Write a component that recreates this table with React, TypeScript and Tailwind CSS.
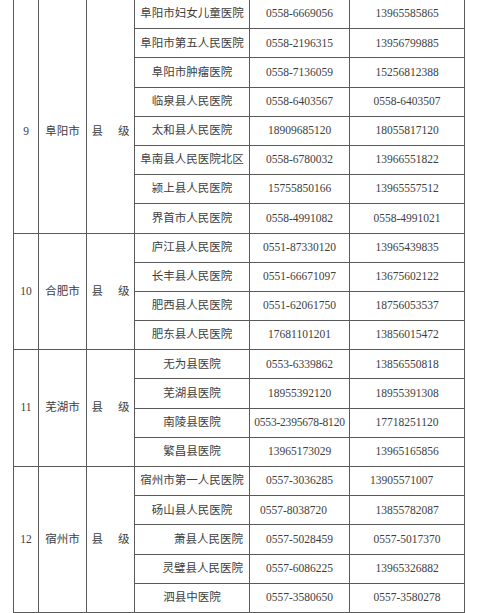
import React from "react";

type Row = { name: string; p1: string; p2: string; nameCls?: string; p1Cls?: string; p2Cls?: string };
type Group = { no: string; city: string; rows: Row[]; pad: string; grow: string };

const groups: Group[] = [
  {
    no: "9",
    city: "阜阳市",
    pad: "pt-[30px]",
    grow: "grow-[8]",
    rows: [
      { name: "阜阳市妇女儿童医院", p1: "0558-6669056", p2: "13965585865" },
      { name: "阜阳市第五人民医院", p1: "0558-2196315", p2: "13956799885" },
      { name: "阜阳市肿瘤医院", p1: "0558-7136059", p2: "15256812388" },
      { name: "临泉县人民医院", p1: "0558-6403567", p2: "0558-6403507" },
      { name: "太和县人民医院", p1: "18909685120", p2: "18055817120" },
      { name: "阜南县人民医院北区", p1: "0558-6780032", p2: "13966551822" },
      { name: "颍上县人民医院", p1: "15755850166", p2: "13965557512" },
      { name: "界首市人民医院", p1: "0558-4991082", p2: "0558-4991021" },
    ],
  },
  {
    no: "10",
    city: "合肥市",
    pad: "",
    grow: "grow-[4]",
    rows: [
      { name: "庐江县人民医院", p1: "0551-87330120", p2: "13965439835" },
      { name: "长丰县人民医院", p1: "0551-66671097", p2: "13675602122" },
      { name: "肥西县人民医院", p1: "0551-62061750", p2: "18756053537" },
      { name: "肥东县人民医院", p1: "17681101201", p2: "13856015472" },
    ],
  },
  {
    no: "11",
    city: "芜湖市",
    pad: "",
    grow: "grow-[4]",
    rows: [
      { name: "无为县医院", p1: "0553-6339862", p2: "13856550818" },
      { name: "芜湖县医院", p1: "18955392120", p2: "18955391308" },
      { name: "南陵县医院", p1: "0553-2395678-8120", p2: "17718251120", p1Cls: "tracking-[-0.2px]" },
      { name: "繁昌县医院", p1: "13965173029", p2: "13965165856" },
    ],
  },
  {
    no: "12",
    city: "宿州市",
    pad: "",
    grow: "grow-[5]",
    rows: [
      { name: "宿州市第一人民医院", p1: "0557-3036285", p2: "13905571007", p2Cls: "pr-[11px]" },
      { name: "砀山县人民医院", p1: "0557-8038720", p2: "13855782087", p1Cls: "justify-start pl-[10px]" },
      { name: "萧县人民医院", p1: "0557-5028459", p2: "0557-5017370", nameCls: "justify-end pr-[6px]" },
      { name: "灵璧县人民医院", p1: "0557-6086225", p2: "13965326882", nameCls: "justify-end pr-[6px]" },
      { name: "泗县中医院", p1: "0557-3580650", p2: "0557-3580278" },
    ],
  },
];

const cell = "flex items-center justify-center border-l border-b border-[#5a5a5a] whitespace-nowrap overflow-hidden";

export default function App() {
  return (
    <div className="w-[503px] h-[613px] bg-white overflow-hidden pl-[13px]">
      <div className="flex flex-col h-[613px] w-[452px] border-r border-[#5a5a5a] text-[11.5px] leading-none text-[#3e3e3e] font-['Liberation_Serif','Noto_Sans_CJK_SC',serif]">
        {groups.map((g) => (
          <div key={g.no} className={`flex basis-0 min-h-0 ${g.grow}`}>
            <div className={`${cell} w-[25px] shrink-0 ${g.pad}`}>{g.no}</div>
            <div className={`${cell} w-[48px] shrink-0 ${g.pad}`}>{g.city}</div>
            <div className={`${cell} w-[48px] shrink-0 gap-[15px] ${g.pad}`}>
              <span>县</span>
              <span>级</span>
            </div>
            <div className="flex flex-col flex-1 min-w-0">
              {g.rows.map((r) => (
                <div key={r.name} className="grid grid-cols-[115px_100px_115px] flex-1 basis-0 min-h-0">
                  <div className={`${cell} ${r.nameCls ?? ""}`}>{r.name}</div>
                  <div className={`${cell} ${r.p1Cls ?? ""}`}>{r.p1}</div>
                  <div className={`${cell} ${r.p2Cls ?? ""}`}>{r.p2}</div>
                </div>
              ))}
            </div>
          </div>
        ))}
      </div>
    </div>
  );
}
